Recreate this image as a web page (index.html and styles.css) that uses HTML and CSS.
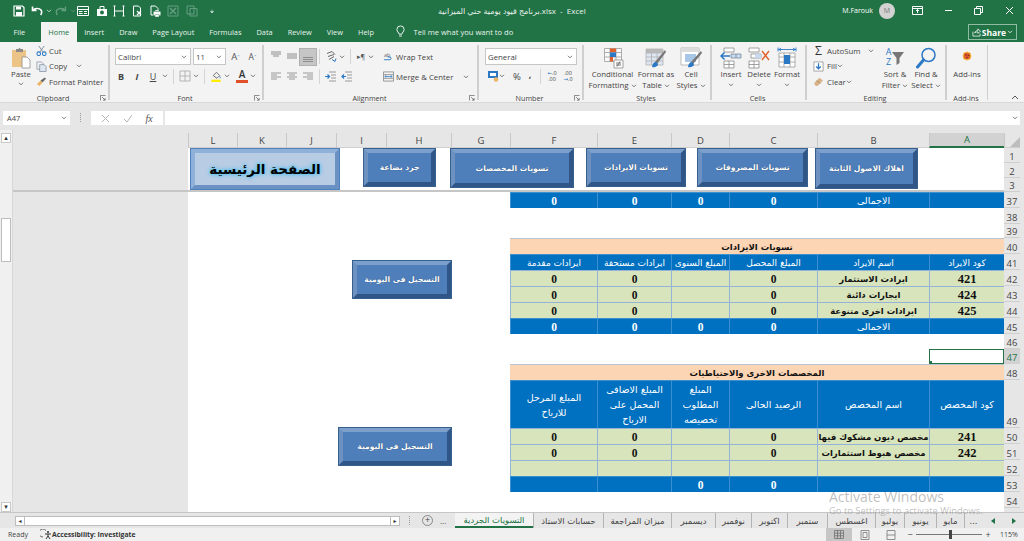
FILE: index.html
```html
<!DOCTYPE html>
<html lang="en">
<head>
    <meta charset="UTF-8">
    <title>برنامج قيود يومية حتي الميزانية.xlsx - Excel</title>
    <link rel="stylesheet" href="styles.css">
</head>
<body>
<svg class="defs" width="0" height="0">
    <symbol id="chev" viewBox="0 0 7 5"><path d="M1 1l2.5 2.5L6 1" fill="none" stroke="#555" stroke-width="1"/></symbol>
    <symbol id="launch" viewBox="0 0 7 7"><path d="M.5 6.5v-6h6M2.5 2.5l3.5 3.5M6 3.5V6H3.5" fill="none" stroke="#666" stroke-width=".9"/></symbol>
</svg>
<div class="app">
    <header class="titlebar">
        <div class="qat">
            <svg class="q" style="margin-left:13px" viewBox="0 0 12 12"><path d="M1 1h8.5L11 2.5V11H1z" fill="none" stroke="#fff" stroke-width="1.2"/><path d="M3 1.5h5v3H3zM3 7h6v4H3z" fill="#fff"/></svg>
            <svg class="q" style="margin-left:6px" viewBox="0 0 12 12"><path d="M1.5 1.5v4h4M2 5.2C3.5 3.2 8 2.6 10 5c1 1.4 1 3-.3 5" fill="none" stroke="#fff" stroke-width="1.6"/></svg>
            <svg class="c" viewBox="0 0 7 5"><path d="M1 1l2.5 2.5L6 1" fill="none" stroke="#dfeee5"/></svg>
            <svg class="q dim" style="margin-left:3px" viewBox="0 0 12 12"><path d="M10.5 1.5v4h-4M10 5.2C8.5 3.2 4 2.6 2 5c-1 1.4-1 3 .3 5" fill="none" stroke="#fff" stroke-width="1.4"/></svg>
            <svg class="c dim" viewBox="0 0 7 5"><path d="M1 1l2.5 2.5L6 1" fill="none" stroke="#fff"/></svg>
            <svg class="q" style="margin-left:1px" viewBox="0 0 12 12"><path d="M.5 1.5h11v9H.5z" fill="none" stroke="#fff"/><path d="M.5 4.5h11M2 6.5h3.5M2 8.5h3.5M7 6.5h3M7 8.5h3" stroke="#fff"/></svg>
            <svg class="q" style="margin-left:7px" viewBox="0 0 12 12"><path d="M1 4h10v7H1z" fill="#fff"/><path d="M4 4V1.5h4V4" fill="none" stroke="#fff"/><circle cx="6" cy="7.5" r="2" fill="#217346"/></svg>
            <svg class="q" style="margin-left:5px" viewBox="0 0 12 12"><path d="M1.5 1v10M10.5 1v10M1.5 6h9M.5 1h2M9.5 1h2M.5 11h2M9.5 11h2" fill="none" stroke="#fff"/></svg>
            <svg class="q" style="margin-left:6px" viewBox="0 0 12 12"><path d="M2.5 1h5l2 2v8h-7z" fill="none" stroke="#fff"/><path d="M6 6l4 4M10 6l-4 4" stroke="#fff" stroke-width="1.2"/></svg>
            <svg class="q" style="margin-left:6px" viewBox="0 0 12 12"><path d="M2 1h4.5L9 3.5V6M2 1v9h2" fill="none" stroke="#fff"/><path d="M4.5 6.5h7v4h-7z" fill="#fff"/><path d="M6 5h4v1.5H6zM6 9.5h4V12H6z" fill="#fff" stroke="#217346" stroke-width=".4"/></svg>
            <svg class="q dim" style="margin-left:6px" viewBox="0 0 12 12"><path d="M1 1h10v10H1z" fill="none" stroke="#fff"/><path d="M3 3l6 6M9 3L3 9" stroke="#fff" stroke-width="1.5"/></svg>
            <svg class="q dim" style="margin-left:7px" viewBox="0 0 12 12"><path d="M1 1h7v8H1zM4 3.5h7V11H4z" fill="none" stroke="#fff"/></svg>
            <svg class="c" style="margin-left:11px" viewBox="0 0 7 5"><path d="M2 1.5h3M1.5 3h4L3.5 5z" fill="#fff" stroke="#fff" stroke-width=".4"/></svg>
        </div>
        <div class="doc-title"><span dir="ltr">برنامج قيود يومية حتي الميزانية.xlsx&nbsp; - &nbsp;Excel</span></div>
        <div class="win">
            <span class="user">M.Farouk</span>
            <span class="avatar">M</span>
            <svg class="w1" viewBox="0 0 11 9"><path d="M.5 .5h10v8H.5zM.5 2.5h10" fill="none" stroke="#fff"/><path d="M5.5 7V3.5M4 5l1.5-1.5L7 5" fill="none" stroke="#fff"/></svg>
            <svg class="w2" viewBox="0 0 9 9"><path d="M1 4.5h7" stroke="#fff"/></svg>
            <svg class="w3" viewBox="0 0 9 9"><path d="M.5 2.5h6v6h-6zM2.5 2.5V.5h6v6h-2" fill="none" stroke="#fff"/></svg>
            <svg class="w4" viewBox="0 0 9 9"><path d="M1 1l7 7M8 1L1 8" stroke="#fff"/></svg>
        </div>
    </header>

    <nav class="tabsbar">
        <span class="tab tab-file">File</span>
        <span class="tab tab-on">Home</span>
        <span class="tab">Insert</span>
        <span class="tab">Draw</span>
        <span class="tab">Page Layout</span>
        <span class="tab">Formulas</span>
        <span class="tab">Data</span>
        <span class="tab">Review</span>
        <span class="tab">View</span>
        <span class="tab">Help</span>
        <svg class="bulb" viewBox="0 0 10 14"><path d="M3.5 10C3.2 8 1 7.2 1 4.8a4 4 0 0 1 8 0C9 7.2 6.8 8 6.5 10zM3.5 12h3" fill="none" stroke="#fff"/></svg>
        <span class="tell">Tell me what you want to do</span>
        <span class="share">
            <svg viewBox="0 0 10 10" width="9" height="9"><path d="M1 4v5h8V6M3 5.5C3.5 3.5 5 2.8 6.5 2.8V1L9.5 3.5 6.5 6V4.3C5 4.3 4 4.6 3 5.5z" fill="none" stroke="#fff" stroke-width=".8"/></svg>
            <b>Share</b>
            <svg viewBox="0 0 7 5" width="6" height="4"><path d="M1 1l2.5 2.5L6 1" fill="none" stroke="#fff"/></svg>
        </span>
    </nav>

    <section class="ribbon">
        <div class="group g-clip">
            <div class="body">
                <div class="paste">
                    <svg width="20" height="22" viewBox="0 0 20 22"><path d="M1 3h14v17H1z" fill="#edc487"/><path d="M5 2h2.5a1 1 0 0 1 2 0H12v3H5z" fill="#8a8a8a"/><path d="M11 10h5l3 3v8h-8z" fill="#fff" stroke="#8e8e8e" stroke-width=".8"/></svg>
                    <span>Paste</span>
                    <svg class="chev"><use href="#chev"/></svg>
                </div>
                <div class="clip-list">
                    <div class="line"><svg class="ic" viewBox="0 0 12 12"><path d="M3 1l5 7M9 1L4 8" stroke="#7b8794" fill="none"/><circle cx="3" cy="9.5" r="2" fill="none" stroke="#2b78c5" stroke-width="1.1"/><circle cx="9" cy="9.5" r="2" fill="none" stroke="#2b78c5" stroke-width="1.1"/></svg><span>Cut</span></div>
                    <div class="line"><svg class="ic" viewBox="0 0 12 12"><path d="M1 1h5l2 2v6H1z" fill="#eef2f6" stroke="#8a939c" stroke-width=".8"/><path d="M4 4h5l2 2v5.5H4z" fill="#dbe6f1" stroke="#7d8b99" stroke-width=".8"/></svg><span>Copy</span><svg class="chev ml"><use href="#chev"/></svg></div>
                    <div class="line"><svg class="ic" viewBox="0 0 12 12"><path d="M1 9l4-4 2 2-3 4z" fill="#ecb562"/><path d="M5 5l2 2 4-4-1.5-1.5z" fill="#6b6b6b"/></svg><span>Format Painter</span></div>
                </div>
            </div>
            <div class="foot"><i></i><span>Clipboard</span><svg class="launch"><use href="#launch"/></svg></div>
        </div>

        <div class="group g-font">
            <div class="body col">
                <div class="row r-top">
                    <span class="select s-name">Calibri<svg class="chev"><use href="#chev"/></svg></span>
                    <span class="select s-size">11<svg class="chev"><use href="#chev"/></svg></span>
                    <span class="btn grow">A<sup>˄</sup></span>
                    <span class="btn grow sm">A<sup>˅</sup></span>
                </div>
                <div class="row r-low">
                    <span class="btn fmt"><b>B</b></span>
                    <span class="btn fmt"><b><i>I</i></b></span>
                    <span class="btn fmt"><u>U</u></span>
                    <svg class="chev"><use href="#chev"/></svg>
                    <span class="vsep"></span>
                    <svg class="ic2" viewBox="0 0 12 12"><path d="M1 1h10v10H1zM6 1v10M1 6h10" fill="none" stroke="#b4b4b4"/></svg>
                    <svg class="chev"><use href="#chev"/></svg>
                    <span class="vsep"></span>
                    <svg class="ic2" viewBox="0 0 12 13"><path d="M3 6l3.5-3.5L10 6l-3 3z" fill="none" stroke="#666"/><path d="M10 7c.8 1 1 1.5.5 2" fill="none" stroke="#2b78c5"/><path d="M1 10.5h10V13H1z" fill="#ffec00"/></svg>
                    <svg class="chev"><use href="#chev"/></svg>
                    <span class="font-a">A</span>
                    <svg class="chev"><use href="#chev"/></svg>
                </div>
            </div>
            <div class="foot"><i></i><span>Font</span><svg class="launch"><use href="#launch"/></svg></div>
        </div>

        <div class="group g-align">
            <div class="body">
                <div class="al-left">
                    <div class="row al-row">
                        <svg class="al" viewBox="0 0 12 12"><path d="M1 1.5h10M1 3.5h10M3 5.5h6" stroke="#8d8d8d"/></svg>
                        <svg class="al" viewBox="0 0 12 12"><path d="M1 3.5h10M1 5.5h10M1 7.5h10" stroke="#8d8d8d"/></svg>
                        <svg class="al on" viewBox="0 0 16 16"><path d="M3 8.5h10M3 10.5h10M3 12.5h10" stroke="#8d8d8d"/></svg>
                        <span class="vsep"></span>
                        <svg class="al" viewBox="0 0 12 12"><path d="M2 3l5-2 3 3M3 6l6-2M4 9l5-3" fill="none" stroke="#666"/><path d="M7 9l3 2 1-3" fill="none" stroke="#2b78c5"/></svg>
                        <svg class="chev"><use href="#chev"/></svg>
                        <span class="vsep v2"></span>
                        <span class="rtl">▸¶</span>
                        <svg class="chev"><use href="#chev"/></svg>
                    </div>
                    <div class="row al-row low">
                        <svg class="al" viewBox="0 0 12 12"><path d="M1 2.5h10M1 4.5h6M1 6.5h10M1 8.5h6" stroke="#9a9a9a"/></svg>
                        <svg class="al" viewBox="0 0 12 12"><path d="M1 2.5h10M3 4.5h6M1 6.5h10M3 8.5h6" stroke="#9a9a9a"/></svg>
                        <svg class="al" viewBox="0 0 12 12"><path d="M1 2.5h10M5 4.5h6M1 6.5h10M5 8.5h6" stroke="#9a9a9a"/></svg>
                        <span class="vsep"></span>
                        <svg class="al" viewBox="0 0 12 12"><path d="M4 1.5h7M6 4.5h5M6 7.5h5M4 10.5h7" stroke="#9a9a9a"/><path d="M0 6h4M2.5 4l2 2-2 2" fill="none" stroke="#2b78c5" stroke-width="1.2"/></svg>
                        <svg class="al" viewBox="0 0 12 12"><path d="M4 1.5h7M6 4.5h5M6 7.5h5M4 10.5h7" stroke="#9a9a9a"/><path d="M5 6H1M3 4L1 6l2 2" fill="none" stroke="#2b78c5" stroke-width="1.2"/></svg>
                    </div>
                </div>
                <div class="al-right">
                    <div class="line wrap"><svg class="ic" viewBox="0 0 12 12"><text x="1" y="6" font-size="6" fill="#666" font-family="Open Sans">ab</text><path d="M1 9.5h7a2 2 0 0 0 0-3H5" fill="none" stroke="#2b78c5"/></svg><span>Wrap Text</span></div>
                    <div class="line merge"><svg class="ic" viewBox="0 0 12 12"><path d="M.5 1h11v10H.5zM.5 4h11M.5 8h11" fill="none" stroke="#7a7a7a" stroke-width=".8"/><path d="M2 6h8M3.5 5L2 6l1.5 1M8.5 5L10 6 8.5 7" fill="none" stroke="#2b78c5" stroke-width=".8"/></svg><span>Merge &amp; Center</span><svg class="chev mc"><use href="#chev"/></svg></div>
                </div>
            </div>
            <div class="foot"><i></i><span>Alignment</span><svg class="launch"><use href="#launch"/></svg></div>
        </div>

        <div class="group g-num">
            <div class="body col">
                <div class="row r-top"><span class="select s-gen">General<svg class="chev"><use href="#chev"/></svg></span></div>
                <div class="row r-low num-row">
                    <svg class="ic2" viewBox="0 0 12 12"><path d="M1 1h10v7H1z" fill="#2b78c5"/><path d="M3 3h6v3H3z" fill="#fff"/><circle cx="9" cy="9.5" r="2.3" fill="#ecb562"/></svg>
                    <svg class="chev"><use href="#chev"/></svg>
                    <span class="pct">%</span>
                    <span class="comma">,</span>
                    <span class="vsep"></span>
                    <span class="dec"><i>←</i>.0<br>.00</span>
                    <span class="dec">.00<br><i>→</i>.0</span>
                </div>
            </div>
            <div class="foot"><i></i><span>Number</span><svg class="launch"><use href="#launch"/></svg></div>
        </div>

        <div class="group g-styles">
            <div class="body bigs">
                <div class="big b53">
                    <svg class="bi" viewBox="0 0 22 22"><path d="M2.5 1.5h17v13h-17zM2.5 5.5h17M2.5 10h17M8 1.5v13M14 1.5v13" fill="#fafafa" stroke="#9a9a9a" stroke-width=".8"/><path d="M8 1.5h6V5H8z" fill="#e0612e"/><path d="M8 5.5h6V10H8z" fill="#2b78c5"/><path d="M8 10h3v4.5H8z" fill="#e0612e"/><path d="M12 13h9v8h-9z" fill="#fff" stroke="#8a8a8a" stroke-width=".8"/><path d="M14 16h5M14 18h5M18 14.5l-3 5" stroke="#555" stroke-width=".8"/></svg>
                    <span>Conditional</span><span>Formatting<svg class="chev"><use href="#chev"/></svg></span>
                </div>
                <div class="big b34">
                    <svg class="bi" viewBox="0 0 22 22"><path d="M1 2h17v16H1zM1 6h17M1 10h17M1 14h17M6.5 2v16M12 2v16" fill="#dde6f0" stroke="#a9a9a9" stroke-width=".7"/><path d="M1 2h17v4H1z" fill="#b8b8b8"/><path d="M20 3L10 15l2 2L21 5z" fill="#777"/><path d="M7 20c0-3 2-5 4-5l2 2c0 2-3 4-6 3z" fill="#2b78c5"/></svg>
                    <span>Format as</span><span>Table<svg class="chev"><use href="#chev"/></svg></span>
                </div>
                <div class="big b36">
                    <svg class="bi" viewBox="0 0 22 22"><path d="M1 1h18v17H1z" fill="#fff" stroke="#a9a9a9" stroke-width=".8"/><path d="M1 1h18v4H1z" fill="#dcdcdc"/><path d="M5 7h11v8H5z" fill="#a8c6e6"/><path d="M21 4L11 15l2 2L22 6z" fill="#777"/><path d="M8 20c0-3 2-5 4-5l2 2c0 2-3 4-6 3z" fill="#2b78c5"/></svg>
                    <span>Cell</span><span>Styles<svg class="chev"><use href="#chev"/></svg></span>
                </div>
            </div>
            <div class="foot"><i></i><span>Styles</span><i></i></div>
        </div>

        <div class="group g-cells">
            <div class="body bigs">
                <div class="big b28">
                    <svg class="bi" viewBox="0 0 22 22"><path d="M4 1h10v4H4zM4 14h10v7H4zM9 14v7M4 17.5h10" fill="#fff" stroke="#8a8a8a" stroke-width=".8"/><path d="M11 7h10v4H11zM16 7v4" fill="#c7d9ee" stroke="#7d8b99" stroke-width=".8"/><path d="M10 9H1M4.5 5.5L1 9l3.5 3.5" fill="none" stroke="#2b78c5" stroke-width="1.5"/></svg>
                    <span>Insert</span><svg class="chev"><use href="#chev"/></svg>
                </div>
                <div class="big b28">
                    <svg class="bi" viewBox="0 0 22 22"><path d="M1 1h10v4H1zM1 14h10v7H1zM6 14v7M1 17.5h10M3 7h10v4H3z" fill="#fff" stroke="#8a8a8a" stroke-width=".8"/><path d="M7 7h6v4H7z" fill="#c7d9ee"/><path d="M14 4l7 9M21 4l-7 9" stroke="#e0612e" stroke-width="1.4"/></svg>
                    <span>Delete</span><svg class="chev"><use href="#chev"/></svg>
                </div>
                <div class="big b28">
                    <svg class="bi" viewBox="0 0 22 22"><path d="M3 6h16v14H3zM8 6v14M14 6v14M3 10h16M3 15h16" fill="#fff" stroke="#9a9a9a" stroke-width=".8"/><path d="M8 8h6v9H8z" fill="#2b78c5"/><path d="M2 2.5h18M2 .5v4M20 .5v4M5 1L3 2.5 5 4M17 1l2 1.5L17 4" fill="none" stroke="#2b78c5" stroke-width=".9"/></svg>
                    <span>Format</span><svg class="chev"><use href="#chev"/></svg>
                </div>
            </div>
            <div class="foot"><i></i><span>Cells</span><i></i></div>
        </div>

        <div class="group g-edit">
            <div class="body bigs">
                <div class="edit-list">
                    <div class="line"><span class="ic sigma">Σ</span><span>AutoSum</span><svg class="chev me"><use href="#chev"/></svg></div>
                    <div class="line"><svg class="ic" viewBox="0 0 12 12"><path d="M1 1h10v10H1z" fill="#fff" stroke="#8a8a8a" stroke-width=".8"/><path d="M6 2.5v6M3.5 6L6 8.5 8.5 6" fill="none" stroke="#2b78c5" stroke-width="1.4"/></svg><span>Fill</span><svg class="chev"><use href="#chev"/></svg></div>
                    <div class="line"><svg class="ic" viewBox="0 0 12 12"><path d="M1 8l6-6 4 3-6 6H3z" fill="#d9b48a"/><path d="M4 5l4 3" stroke="#b08a5e"/></svg><span>Clear</span><svg class="chev"><use href="#chev"/></svg></div>
                </div>
                <div class="big b30">
                    <div class="sort-ic">
                        <span class="az">A<br>Z</span>
                        <svg viewBox="0 0 12 16" width="12" height="16"><path d="M0 3h12L7.500 9v5l-3 2V9z" fill="#777"/></svg>
                    </div>
                    <span>Sort &amp;</span><span>Filter<svg class="chev"><use href="#chev"/></svg></span>
                </div>
                <div class="big b32">
                    <svg class="bi" viewBox="0 0 22 22"><circle cx="13.5" cy="8" r="6.5" fill="none" stroke="#2b78c5" stroke-width="1.5"/><path d="M8.5 13l-6 7" stroke="#2b78c5" stroke-width="3" stroke-linecap="round"/></svg>
                    <span>Find &amp;</span><span>Select<svg class="chev"><use href="#chev"/></svg></span>
                </div>
            </div>
            <div class="foot"><i></i><span>Editing</span><i></i></div>
        </div>

        <div class="group g-add">
            <div class="body bigs">
                <div class="big b41">
                    <svg class="bi" viewBox="0 0 22 22"><circle cx="11" cy="9" r="4" fill="#e0612e" stroke="#f4c542"/><circle cx="10" cy="8" r=".8" fill="#7a2c10"/><circle cx="12.5" cy="8.5" r=".8" fill="#7a2c10"/><circle cx="11" cy="10.5" r=".8" fill="#7a2c10"/></svg>
                    <span>Add-ins</span>
                </div>
            </div>
            <div class="foot"><i></i><span>Add-ins</span><i></i></div>
        </div>
        <svg class="collapse" viewBox="0 0 8 5"><path d="M1 4l3-3 3 3" fill="none" stroke="#555"/></svg>
    </section>

    <section class="formulabar">
        <div class="namebox">A47<svg class="chev"><use href="#chev"/></svg></div>
        <span class="grip"></span>
        <div class="fx-box">
            <svg viewBox="0 0 9 9" width="9" height="9"><path d="M1 1l7 7M8 1L1 8" stroke="#b5b5b5"/></svg>
            <svg viewBox="0 0 10 9" width="10" height="9"><path d="M1 5l3 3 5-7" fill="none" stroke="#b5b5b5"/></svg>
            <i>fx</i>
        </div>
        <div class="formula-input"><svg class="chev"><use href="#chev"/></svg></div>
    </section>

    <main class="sheet-area">
        <div class="vscroll">
            <span class="sb-btn">▴</span>
            <span class="sb-track"><span class="sb-thumb"></span></span>
            <span class="sb-btn">▾</span>
        </div>
        <div class="outside"><div class="outside-top"></div></div>
        <div class="grid-wrap">
            <table class="grid" dir="rtl">
                <colgroup>
                    <col class="c-rh"><col class="c-a"><col class="c-b"><col class="c-c"><col class="c-d"><col class="c-e"><col class="c-f"><col class="c-g"><col class="c-h"><col class="c-i"><col class="c-j"><col class="c-k"><col class="c-l">
                </colgroup>
                <tr class="colhead h15">
                    <th class="corner"><span></span></th><th class="cur">A</th><th>B</th><th>C</th><th>D</th><th>E</th><th>F</th><th>G</th><th>H</th><th>I</th><th>J</th><th>K</th><th>L</th>
                </tr>
                <tr class="h15"><th>1</th></tr>
                <tr class="h15"><th>2</th></tr>
                <tr class="h14 lastfrozen"><th>3</th><td colspan="12"></td></tr>
                <tr class="blue"><th>37</th><td></td><td class="lbl">الاجمالى</td><td>0</td><td>0</td><td>0</td><td>0</td></tr>
                <tr><th>38</th></tr>
                <tr class="h14"><th>39</th></tr>
                <tr class="peach"><th>40</th><td colspan="6">تسويات الايرادات</td></tr>
                <tr class="blue heads one"><th>41</th><td>كود الايراد</td><td>اسم الايراد</td><td>المبلغ المحصل</td><td>المبلغ السنوى</td><td>ايرادات مستحقة</td><td>ايرادات مقدمة</td></tr>
                <tr class="green"><th>42</th><td class="code">421</td><td class="lbl">ايرادت الاستثمار</td><td>0</td><td></td><td>0</td><td>0</td></tr>
                <tr class="green"><th>43</th><td class="code">424</td><td class="lbl">ايجارات دائنة</td><td>0</td><td></td><td>0</td><td>0</td></tr>
                <tr class="green"><th>44</th><td class="code">425</td><td class="lbl">ايرادات اخرى متنوعة</td><td>0</td><td></td><td>0</td><td>0</td></tr>
                <tr class="blue"><th>45</th><td></td><td class="lbl">الاجمالى</td><td>0</td><td>0</td><td>0</td><td>0</td></tr>
                <tr class="h15"><th>46</th></tr>
                <tr class="h15"><th class="cur">47</th><td class="selected"></td></tr>
                <tr class="peach"><th>48</th><td colspan="6">المخصصات الاخرى والاحتياطيات</td></tr>
                <tr class="blue heads tall"><th>49</th><td>كود المخصص</td><td>اسم المخصص</td><td>الرصيد الحالى</td><td>المبلغ المطلوب تخصيصه</td><td>المبلغ الاضافى المحمل على الارباح</td><td>المبلغ المرحل للارباح</td></tr>
                <tr class="green"><th>50</th><td class="code">241</td><td class="lbl">مخصص ديون مشكوك فيها</td><td>0</td><td></td><td>0</td><td>0</td></tr>
                <tr class="green"><th>51</th><td class="code">242</td><td class="lbl">مخصص هبوط استثمارات</td><td>0</td><td></td><td>0</td><td>0</td></tr>
                <tr class="green"><th>52</th><td></td><td></td><td></td><td></td><td></td><td></td></tr>
                <tr class="blue"><th>53</th><td></td><td></td><td>0</td><td>0</td><td></td><td></td></tr>
                <tr><th>54</th></tr>
                <tr><th></th></tr>
            </table>
        </div>

        <div class="shape home s-home">الصفحة الرئيسية</div>
        <div class="shape s-stock">جرد بضاعة</div>
        <div class="shape s-prov">تسويات المخصصات</div>
        <div class="shape s-rev">تسويات الايرادات</div>
        <div class="shape s-exp">تسويات المصروفات</div>
        <div class="shape s-dep">اهلاك الاصول الثابتة</div>
        <div class="shape s-post1">التسجيل فى اليومية</div>
        <div class="shape s-post2">التسجيل فى اليومية</div>
    </main>

    <section class="tabstrip">
        <div class="hscroll"><span class="hs-btn">◂</span><span class="hs-track"></span><span class="hs-btn">▸</span></div>
        <span class="grip g2"></span>
        <span class="addsheet">+</span>
        <span class="more">...</span>
        <div class="sheets" dir="rtl">
            <span class="nav"><svg viewBox="0 0 4 6" width="4" height="6"><path d="M0 0l4 3-4 3z" fill="#217346"/></svg></span>
            <span class="nav"><svg viewBox="0 0 4 6" width="4" height="6"><path d="M4 0L0 3l4 3z" fill="#217346"/></svg></span>
            <span class="st w18">...</span>
            <span class="st w28">مايو</span>
            <span class="st w32">يونيو</span>
            <span class="st w29">يوليو</span>
            <span class="st w48">اغسطس</span>
            <span class="st w40">ستمبر</span>
            <span class="st w36">اكتوبر</span>
            <span class="st w36">نوفمبر</span>
            <span class="st w44">ديسمبر</span>
            <span class="st w68">ميزان المراجعة</span>
            <span class="st w70">حسابات الاستاذ</span>
            <span class="st w78 active">التسويات الجردية</span>
        </div>
    </section>

    <footer class="statusbar">
        <span class="ready">Ready</span>
        <svg class="acc" viewBox="0 0 12 11"><path d="M6 1.5a4 4 0 1 0-3 6.5" fill="none" stroke="#666"/><circle cx="8" cy="3" r="1" fill="#333"/><path d="M5 5h6M8 5v2l-2 3M8 7l2 3" fill="none" stroke="#333"/></svg>
        <span class="acc-text">Accessibility: Investigate</span>
        <div class="views">
            <span class="view on"><svg viewBox="0 0 10 9" width="10" height="9"><path d="M.5 .5h9v8h-9zM.5 3.2h9M.5 5.8h9M3.5 .5v8M6.5 .5v8" fill="none" stroke="#666" stroke-width=".7"/></svg></span>
            <span class="view"><svg viewBox="0 0 10 10" width="10" height="10"><path d="M1 .5h8v9H1zM3 2.5h4v5H3z" fill="none" stroke="#777" stroke-width=".8"/></svg></span>
            <span class="view"><svg viewBox="0 0 10 10" width="10" height="10"><path d="M1 .5h8v9H1zM1 5h8" fill="none" stroke="#777" stroke-width=".8"/></svg></span>
            <span class="zm">−</span>
            <span class="slider"><span class="knob"></span></span>
            <span class="zm">+</span>
            <span class="pct115">115%</span>
        </div>
    </footer>

    <div class="activate">
        <div class="a1">Activate Windows</div>
        <div class="a2">Go to Settings to activate Windows.</div>
    </div>
</div>
</body>
</html>
```

FILE: styles.css
```css
* {
    box-sizing: border-box;
}

html, body {
    margin: 0;
    height: 100%;
    overflow: hidden;
}

body {
    font-family: "Open Sans", "DejaVu Sans", sans-serif;
    font-size: 7.8px;
    color: #444;
    background: #e6e6e6;
}

.defs {
    position: absolute;
}

.app {
    position: relative;
    width: 1024px;
    height: 541px;
    display: flex;
    flex-direction: column;
    overflow: hidden;
}

/* title bar */
.titlebar {
    height: 21px;
    background: #217346;
    color: #fff;
    display: flex;
    align-items: center;
}

.qat {
    width: 300px;
    display: flex;
    align-items: center;
}

.q {
    width: 12px;
    height: 12px;
}

.c {
    width: 6px;
    height: 4px;
    margin-left: 3px;
}

.dim {
    opacity: .3;
}

.doc-title {
    width: 290px;
    padding-left: 138px;
    font-size: 8px;
    white-space: nowrap;
    color: #e8f2ec;
}

.win {
    flex: 1;
    display: flex;
    align-items: center;
    justify-content: flex-end;
    padding: 0 10px 0 8px;
}

.user {
    font-size: 7px;
    margin-right: 6px;
}

.avatar {
    width: 16px;
    height: 16px;
    border-radius: 50%;
    background: #d2d2d2;
    color: #777;
    font-size: 7px;
    display: flex;
    align-items: center;
    justify-content: center;
    margin-right: 17px;
}

.w1 { width: 11px; height: 9px; margin-right: 21px; }
.w2 { width: 9px; height: 9px; margin-right: 21px; }
.w3 { width: 9px; height: 9px; margin-right: 22px; }
.w4 { width: 9px; height: 9px; }

/* ribbon tabs */
.tabsbar {
    height: 21px;
    background: #217346;
    color: #e8f2ec;
    display: flex;
    align-items: stretch;
    font-size: 7.4px;
    padding-left: 6px;
}

.tab {
    padding: 0 7.5px;
    display: flex;
    align-items: center;
    white-space: nowrap;
}

.tab-file {
    margin-right: 9px;
}

.tab-on {
    background: #f3f3f3;
    color: #217346;
    width: 36px;
    margin: 1px 0 0 -1px;
    justify-content: center;
    padding: 0;
}

.bulb {
    width: 9px;
    height: 13px;
    align-self: center;
    margin: 0 8px 0 15px;
}

.tell {
    align-self: center;
    white-space: nowrap;
    font-size: 7.6px;
}

.share {
    position: absolute;
    top: 24px;
    left: 968px;
    width: 49px;
    height: 16px;
    border: 1px solid #8fbba2;
    color: #fff;
    font-size: 8.5px;
    display: flex;
    align-items: center;
    justify-content: space-between;
    padding: 0 3px;
}

/* ribbon */
.ribbon {
    height: 61px;
    background: #f3f3f3;
    border-bottom: 1px solid #d8d8d8;
    display: flex;
    padding-top: 3px;
    position: relative;
}

.group {
    height: 55px;
    border-right: 2px solid #cfcfcf;
    display: flex;
    flex-direction: column;
    flex: none;
}

.g-clip { width: 110px; }
.g-font { width: 154px; }
.g-align { width: 215px; }
.g-num { width: 105px; }
.g-styles { width: 128px; }
.g-cells { width: 95px; }
.g-edit { width: 140px; }
.g-add { width: 41px; border-right-width: 1px; }

.body {
    flex: 1;
    display: flex;
    min-height: 0;
}

.col {
    flex-direction: column;
}

.foot {
    height: 10px;
    flex: none;
    display: grid;
    grid-template-columns: 1fr auto 1fr;
    align-items: center;
    text-align: center;
    font-size: 7.2px;
    line-height: 10px;
    padding-right: 2px;
    margin-bottom: -3px;
}

.launch {
    width: 6px;
    height: 6px;
    justify-self: end;
}

.chev {
    width: 6px;
    height: 4px;
    flex: none;
}

.row {
    display: flex;
    align-items: center;
}

.line {
    display: flex;
    align-items: center;
    height: 15.5px;
    white-space: nowrap;
}

.ic {
    width: 11px;
    height: 11px;
    flex: none;
    margin-right: 2px;
}

.ic2 {
    width: 12px;
    height: 12px;
    flex: none;
}

/* clipboard */
.paste {
    width: 36px;
    padding: 2px 0 0 6px;
    display: flex;
    flex-direction: column;
    align-items: center;
    line-height: 11px;
}

.paste span {
    width: 20px;
    text-align: center;
}

.paste .chev {
    margin-top: 2px;
}

.clip-list {
    margin-top: -2px;
}

.ml {
    margin-left: 9px;
}

/* font */
.r-top {
    margin: 3px 0 0 5px;
    height: 17px;
}

.r-low {
    margin: 3px 0 0 4px;
    height: 16px;
    gap: 2px;
}

.select {
    height: 17px;
    background: #fff;
    border: 1px solid #c6c6c6;
    display: flex;
    align-items: center;
    justify-content: space-between;
    padding: 0 3px 0 2px;
}

.s-name { width: 76px; }
.s-size { width: 33px; margin-left: 2px; }
.s-gen { width: 92px; }

.btn {
    display: flex;
    align-items: center;
    justify-content: center;
}

.grow {
    width: 15px;
    font-size: 9.5px;
    margin-left: 2px;
    color: #555;
}

.grow sup {
    font-size: 5px;
    color: #2b78c5;
    line-height: 4px;
}

.sm {
    font-size: 8.5px;
}

.fmt {
    width: 14px;
    font-size: 9px;
}

.vsep {
    width: 1px;
    height: 15px;
    background: #d4d4d4;
    flex: none;
    margin: 0 3px;
}

.font-a {
    width: 12px;
    height: 14px;
    font-size: 10px;
    line-height: 10px;
    font-weight: 600;
    text-align: center;
    color: #333;
    border-bottom: 3px solid #e0512a;
    margin-left: 4px;
}

/* alignment */
.al-left {
    width: 119px;
    padding-left: 4px;
}

.al-row {
    height: 17px;
    margin-top: 3px;
}

.al {
    width: 16px;
    height: 13px;
    flex: none;
    padding: 0 2px;
}

.al.on {
    height: 16px;
    padding: 0;
    background: #c6c6c6;
    outline: 1px solid #b0b0b0;
}

.v2 {
    margin: 0 3px 0 5px;
}

.rtl {
    width: 14px;
    font-size: 7px;
    color: #555;
    text-align: center;
}

.al-right {
    padding-top: 3px;
}

.wrap {
    height: 17px;
}

.merge {
    height: 17px;
    margin-top: 3px;
}

.mc {
    margin-left: 10px;
}

/* number */
.g-num .r-top {
    margin-left: 6px;
}

.num-row {
    margin-left: 8px;
    gap: 0;
}

.pct {
    font-size: 9.5px;
    margin-left: 8px;
    width: 10px;
}

.comma {
    width: 14px;
    text-align: center;
    font-weight: 700;
    font-size: 9px;
    margin-top: -4px;
}

.dec {
    width: 16px;
    font-size: 5.5px;
    line-height: 6px;
    text-align: center;
}

.dec i {
    color: #2b78c5;
    font-style: normal;
}

/* big buttons */
.bigs {
    align-items: flex-start;
}

.big {
    display: flex;
    flex-direction: column;
    align-items: center;
    line-height: 11px;
    white-space: nowrap;
    flex: none;
}

.bi {
    width: 22px;
    height: 22px;
    margin-top: 2px;
    flex: none;
}

.big .chev {
    margin-left: 2px;
}

.big > .chev {
    margin: 3px 0 0;
}

.big span {
    display: flex;
    align-items: center;
}

.g-styles .body { padding-left: 2px; }
.g-cells .body { padding-left: 5px; }
.g-edit .body { padding-left: 5px; }

.b53 { width: 53px; }
.b34 { width: 34px; }
.b36 { width: 36px; }
.b28 { width: 28px; }
.b30 { width: 28px; }
.b32 { width: 34px; }
.b41 { width: 40px; }

.edit-list {
    width: 69px;
    margin-top: -2px;
    padding-left: 1px;
}

.edit-list .ic {
    margin-right: 3px;
}

.sigma {
    font-size: 12px;
    line-height: 11px;
    color: #333;
    text-align: center;
}

.me {
    margin-left: 8px;
}

.sort-ic {
    height: 24px;
    display: flex;
    align-items: center;
    gap: 1px;
}

.big .az {
    display: block;
    color: #2b78c5;
    font-size: 9px;
    line-height: 10px;
    text-align: center;
}

.collapse {
    position: absolute;
    left: 1011px;
    top: 53px;
    width: 8px;
    height: 5px;
}

/* formula bar */
.formulabar {
    height: 27px;
    background: #e6e6e6;
    display: flex;
    align-items: flex-start;
    padding-top: 8px;
}

.namebox {
    width: 67px;
    height: 14px;
    margin-left: 3px;
    background: #fff;
    display: flex;
    align-items: center;
    justify-content: space-between;
    padding: 0 3px 0 4px;
    font-size: 7.5px;
}

.grip {
    width: 1px;
    height: 9px;
    margin: 2px 10px 0;
    border-left: 1px dotted #999;
    flex: none;
}

.fx-box {
    width: 72px;
    height: 14px;
    background: #fff;
    display: flex;
    align-items: center;
    justify-content: space-around;
    padding: 0 4px;
}

.fx-box i {
    font-family: "Liberation Serif", serif;
    font-size: 10px;
    color: #555;
}

.formula-input {
    width: 855px;
    height: 14px;
    margin-left: 2px;
    background: #fff;
    display: flex;
    align-items: center;
    justify-content: flex-end;
    padding-right: 2px;
}

/* sheet */
.sheet-area {
    height: 382px;
    position: relative;
    display: flex;
    overflow: hidden;
}

.vscroll {
    width: 13px;
    padding: 3px 1px 0;
    display: flex;
    flex-direction: column;
    background: #f0f0f0;
    border-right: 1px solid #d8d8d8;
}

.sb-btn {
    height: 10px;
    background: #fff;
    border: 1px solid #c8c8c8;
    font-size: 7px;
    line-height: 8px;
    text-align: center;
    color: #333;
    flex: none;
}

.sb-track {
    flex: 1;
    padding-top: 75px;
}

.sb-thumb {
    display: block;
    height: 44px;
    background: #fff;
    border: 1px solid #bdbdbd;
}

.outside {
    width: 175px;
    background: #e6e6e6;
}

.outside-top {
    height: 62px;
    border-bottom: 2px solid #c6c6c6;
}

.grid-wrap {
    padding-top: 3px;
}

.grid {
    width: 832px;
    table-layout: fixed;
    border-collapse: separate;
    border-spacing: 0;
    font-family: "Liberation Serif", "DejaVu Sans", serif;
    background: #fff;
    font-size: 11.5px;
}

.c-rh { width: 16px; }
.c-a { width: 75px; }
.c-b { width: 112px; }
.c-c { width: 88px; }
.c-d { width: 58px; }
.c-e { width: 74px; }
.c-f { width: 87px; }
.c-g { width: 59px; }
.c-h { width: 65px; }
.c-i { width: 50px; }
.c-j { width: 50px; }
.c-k { width: 49px; }
.c-l { width: 49px; }

.grid tr {
    height: 16px;
}

.grid tr.h15 { height: 15px; }
.grid tr.h14 { height: 14px; }
.grid tr.tall { height: 48px; }

.grid th {
    background: #e6e6e6;
    border-bottom: 1px solid #cfcfcf;
    font-family: "Open Sans", sans-serif;
    font-weight: 400;
    font-size: 9.5px;
    line-height: 11px;
    color: #444;
    padding: 0;
    vertical-align: bottom;
}

.grid th.cur {
    background: #d2d2d2;
    color: #217346;
}

.grid td {
    padding: 0;
    text-align: center;
    line-height: 12px;
    font-weight: 700;
    overflow: hidden;
}

.colhead th {
    border-left: 1px solid #c8c8c8;
    vertical-align: middle;
}

.colhead th.cur {
    border-bottom: 2px solid #217346;
}

.corner span {
    display: block;
    width: 0;
    height: 0;
    margin: 3px 0 0 3px;
    border-style: solid;
    border-width: 0 0 10px 10px;
    border-color: transparent transparent #bdbdbd transparent;
}

.lastfrozen td {
    border-bottom: 2px solid #c6c6c6;
}

.blue td {
    background: #0070c0;
    color: #fff;
    border-left: 1px solid #3d90cf;
    border-top: 1px solid #3d90cf;
}

.blue .lbl,
.heads td {
    font-family: "DejaVu Sans", sans-serif;
    font-weight: 400;
    font-size: 9.5px;
}

.grid .heads td {
    line-height: 15px;
    padding: 0 2px;
}

.grid .one td {
    font-size: 9px;
    line-height: 12px;
    padding: 0;
    white-space: nowrap;
}

.green td {
    background: #d8e4bc;
    color: #111;
    border-left: 1px solid #95b3d7;
    border-top: 1px solid #95b3d7;
}

.green .lbl {
    font-family: "DejaVu Sans", sans-serif;
    font-size: 8.5px;
}

.code {
    font-size: 12.5px;
}

.peach td {
    background: #fcd5b4;
    color: #111;
    border-top: 1px solid #b8c4d0;
    font-family: "DejaVu Sans", sans-serif;
    font-size: 8.5px;
}

.grid td.selected {
    border: 1px solid #217346;
    position: relative;
    overflow: visible;
}

.selected::after {
    content: "";
    position: absolute;
    left: -1px;
    bottom: -1px;
    width: 3px;
    height: 3px;
    background: #217346;
}

/* floating shapes */
.shape {
    position: absolute;
    top: 18px;
    height: 39px;
    display: flex;
    align-items: center;
    justify-content: center;
    background: #4f7fbb;
    border-style: solid;
    border-width: 5px;
    border-color: #7d9fcb #2f5686 #2f5686 #6d92c2;
    outline: 1px solid #37608f;
    outline-offset: -1px;
    color: #fff;
    font-family: "DejaVu Sans", sans-serif;
    font-weight: 700;
    font-size: 7.6px;
    white-space: nowrap;
    text-shadow: 0 0 1px #1f3d63;
}

.home {
    background: #b8cce4;
    border-color: #8fb0d8 #6a90c4 #6a90c4 #8fb0d8;
    outline-color: #4f81bd;
    color: #000;
    font-size: 13.5px;
    text-shadow: 0 0 4px #62c3ee, 0 0 4px #62c3ee, 0 0 2px #62c3ee;
}

.s-home { left: 190px; width: 150px; height: 42px; }
.s-stock { left: 363px; width: 73px; }
.s-prov { left: 450px; width: 124px; height: 40px; }
.s-rev { left: 586px; width: 100px; }
.s-exp { left: 697px; width: 111px; }
.s-dep { left: 815px; width: 103px; height: 41px; }
.s-post1 { left: 352px; width: 100px; top: 130px; }
.s-post2 { left: 338px; width: 114px; top: 297px; }

/* sheet tabs */
.tabstrip {
    height: 16px;
    background: #e6e6e6;
    border-top: 1px solid #c6c6c6;
    display: flex;
    align-items: center;
    padding-left: 15px;
    position: relative;
}

.hscroll {
    width: 385px;
    height: 10px;
    display: flex;
    flex: none;
}

.hs-btn {
    width: 10px;
    background: #fff;
    border: 1px solid #bdbdbd;
    font-size: 6px;
    line-height: 8px;
    text-align: center;
    color: #333;
}

.hs-track {
    flex: 1;
    background: #fff;
    border-top: 1px solid #bdbdbd;
    border-bottom: 1px solid #bdbdbd;
}

.grip.g2 {
    margin: 0 0 0 9px;
}

.addsheet {
    width: 11px;
    height: 11px;
    margin-left: 12px;
    border: 1px solid #888;
    border-radius: 50%;
    font-size: 9px;
    line-height: 8px;
    text-align: center;
    flex: none;
}

.more {
    margin-left: 7px;
    width: 11px;
    flex: none;
    font-size: 8px;
}

.sheets {
    flex: 1;
    margin-left: 4px;
    height: 15px;
    display: flex;
    font-size: 8.5px;
    font-family: "DejaVu Sans", sans-serif;
}

.nav {
    width: 21px;
    flex: none;
    display: flex;
    align-items: center;
    justify-content: center;
}

.st {
    flex: none;
    display: flex;
    align-items: center;
    justify-content: center;
    white-space: nowrap;
    border-left: 1px solid #b4b4b4;
    color: #444;
    height: 15px;
}

.w18 { width: 18px; }
.w28 { width: 28px; }
.w29 { width: 29px; }
.w32 { width: 32px; }
.w36 { width: 36px; }
.w40 { width: 40px; }
.w44 { width: 44px; }
.w48 { width: 48px; }
.w68 { width: 68px; }
.w70 { width: 70px; }
.w78 { width: 78px; }

.st.active {
    background: #f3f3f3;
    color: #217346;
    border-left: 0;
    border-bottom: 2px solid #217346;
}

/* status bar */
.statusbar {
    height: 13px;
    background: #f0f0f0;
    display: flex;
    align-items: center;
    padding-left: 8px;
    font-size: 7px;
    flex: none;
}

.ready {
    width: 32px;
}

.acc {
    width: 12px;
    height: 11px;
}

.acc-text {
    font-weight: 700;
    color: #333;
    font-size: 6.8px;
    white-space: nowrap;
}

.views {
    margin-left: auto;
    display: flex;
    align-items: center;
    height: 13px;
}

.view {
    width: 26px;
    height: 13px;
    display: flex;
    align-items: center;
    justify-content: center;
}

.view.on {
    background: #c6c6c6;
}

.zm {
    width: 12px;
    text-align: center;
    font-size: 9px;
    line-height: 12px;
}

.slider {
    width: 66px;
    height: 1px;
    background: #777;
    position: relative;
}

.knob {
    position: absolute;
    left: 33px;
    top: -4px;
    width: 3px;
    height: 9px;
    background: #444;
}

.pct115 {
    width: 30px;
    padding-left: 6px;
}

/* watermark */
.activate {
    position: absolute;
    left: 829px;
    top: 490px;
    color: rgba(110, 110, 110, .45);
    white-space: nowrap;
    pointer-events: none;
}

.a1 {
    font-size: 14px;
    line-height: 14px;
}

.a2 {
    font-size: 9.4px;
    line-height: 14px;
}
```
